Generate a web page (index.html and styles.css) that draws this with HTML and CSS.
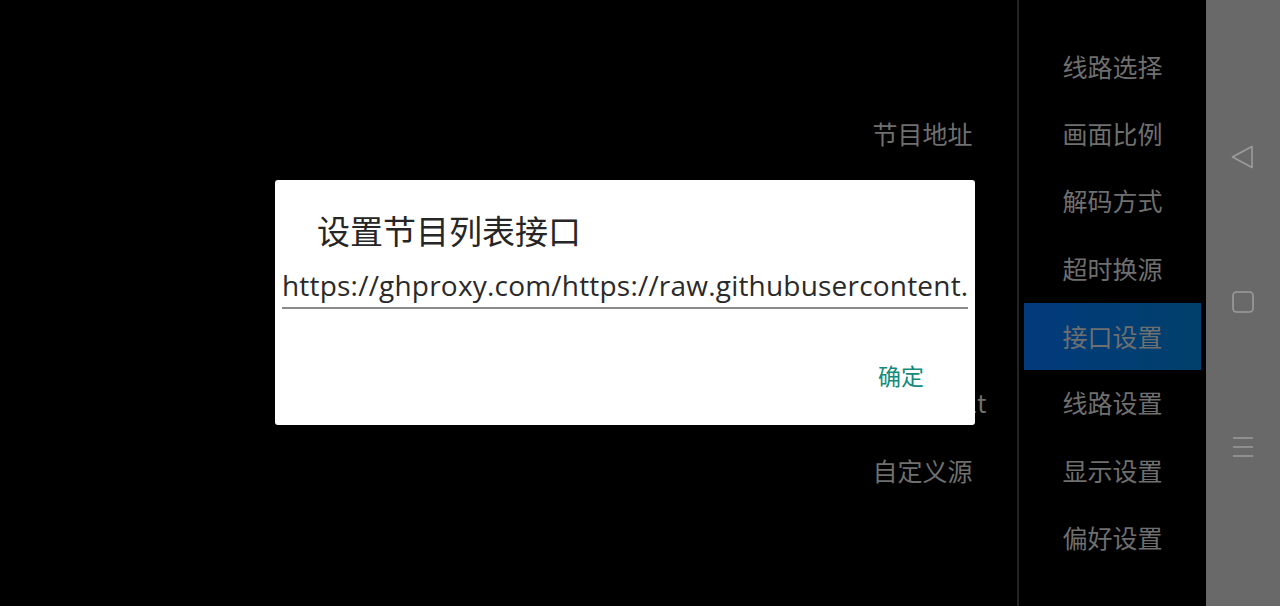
FILE: index.html
```html
<!DOCTYPE html>
<html lang="zh">
<head>
<meta charset="utf-8">
<link rel="stylesheet" href="styles.css">
</head>
<body>
<div class="screen">
  <div class="content">
    <div class="spacer"></div>
    <div class="col col-left">
      <div class="item">节目地址</div>
      <div class="item">直播源</div>
      <div class="item">EPG地址</div>
      <div class="item">频道列表</div>
      <div class="item">Set Default</div>
      <div class="item">自定义源</div>
    </div>
    <div class="divider"></div>
    <div class="col col-right">
      <div class="item">线路选择</div>
      <div class="item">画面比例</div>
      <div class="item">解码方式</div>
      <div class="item">超时换源</div>
      <div class="item selected">接口设置</div>
      <div class="item">线路设置</div>
      <div class="item">显示设置</div>
      <div class="item">偏好设置</div>
    </div>
  </div>
  <div class="navbar">
    <svg class="nav-icon" width="24" height="24" viewBox="0 0 24 24"><path d="M21 1.5 L1.5 12 L21 22.5 Z" fill="none" stroke="#9c9c9c" stroke-width="1.6" stroke-linejoin="round"/></svg>
    <svg class="nav-icon" width="24" height="24" viewBox="0 0 24 24"><rect x="2" y="2" width="20" height="20" rx="3.5" fill="none" stroke="#9c9c9c" stroke-width="1.6"/></svg>
    <svg class="nav-icon" width="24" height="24" viewBox="0 0 24 24"><path d="M2 3 H22 M2 12 H22 M2 21 H22" fill="none" stroke="#9c9c9c" stroke-width="1.4"/></svg>
  </div>

  <div class="dialog">
    <div class="dialog-title">设置节目列表接口</div>
    <div class="dialog-input">https://ghproxy.com/https://raw.githubusercontent.</div>
    <div class="dialog-actions">
      <span class="dialog-btn">确定</span>
    </div>
  </div>
</div>
</body>
</html>
```

FILE: styles.css
```css
html, body {
  margin: 0;
  padding: 0;
  background: #000;
}
body {
  font-family: "Noto Sans CJK SC", "Noto Sans", sans-serif;
}
.screen {
  position: relative;
  width: 1280px;
  height: 606px;
  display: flex;
  overflow: hidden;
}
.content {
  flex: 1;
  display: flex;
  background: #000;
}
.spacer {
  flex: 1;
}
.col {
  display: flex;
  flex-direction: column;
  padding-top: 32.2px;
}
.col-left {
  width: 189px;
  padding-top: 99.5px;
}
.col-right {
  width: 187px;
}
.divider {
  width: 2px;
  background: #232323;
}
.item {
  height: 67.3px;
  display: flex;
  align-items: center;
  justify-content: center;
  font-size: 25px;
  color: #6f6f6f;
  white-space: nowrap;
}
.item.selected {
  margin: 1.5px 5px -1.5px;
  padding-bottom: 1.5px;
  box-sizing: border-box;
  height: 67.3px;
  background: linear-gradient(90deg, #033a7c 0%, #013e72 60%, #01406c 100%);
}
.navbar {
  width: 74px;
  background: #696969;
  display: flex;
  flex-direction: column;
  align-items: center;
  padding-top: 145px;
  gap: 121px;
  box-sizing: border-box;
}
.nav-icon {
  display: block;
}
.dialog {
  position: absolute;
  left: 275px;
  top: 180px;
  width: 700px;
  height: 245px;
  background: #fff;
  border-radius: 3px;
  box-sizing: border-box;
  padding: 30px 7px 0 7px;
  display: flex;
  flex-direction: column;
}
.dialog-title {
  padding-left: 35px;
  font-size: 33px;
  line-height: 40px;
  color: #262626;
}
.dialog-input {
  margin-top: 18px;
  font-family: "Open Sans", "Noto Sans", sans-serif;
  font-size: 28px;
  line-height: 34px;
  padding-bottom: 5px;
  color: #2a2a2a;
  border-bottom: 2px solid #8a8a8a;
  white-space: nowrap;
  letter-spacing: 0.2px;
}
.dialog-actions {
  display: flex;
  justify-content: flex-end;
  margin-top: 51px;
  padding-right: 44px;
}
.dialog-btn {
  font-size: 23px;
  line-height: 30px;
  color: #138a7c;
}
```
